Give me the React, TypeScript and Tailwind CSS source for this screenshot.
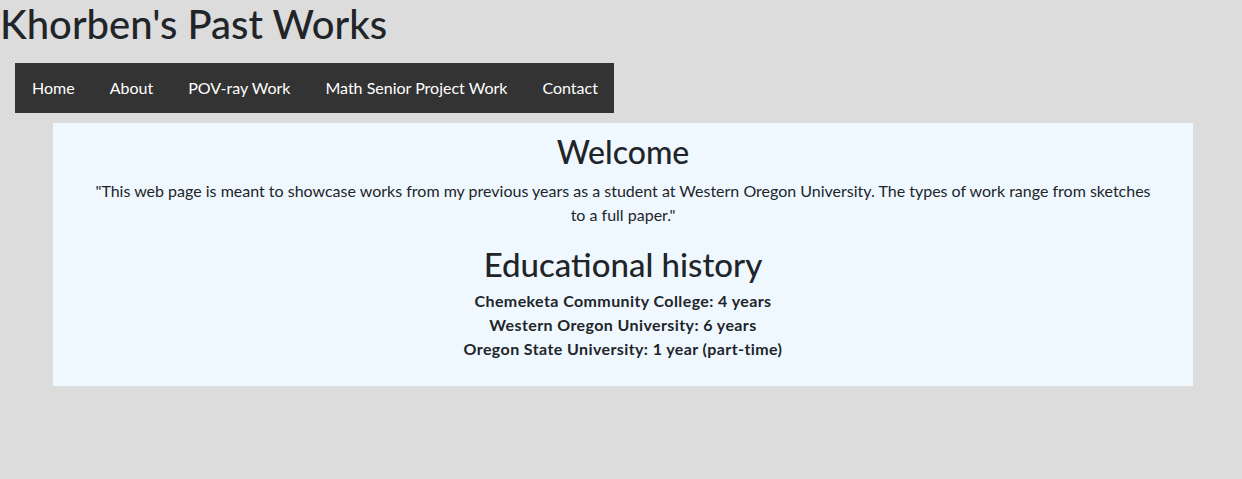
export default function App() {
  const links = ['Home', 'About', 'POV-ray Work', 'Math Senior Project Work', 'Contact'];
  return (
    <div className="bg-[#dcdcdc] min-h-screen text-[#212529]" style={{ fontFamily: 'Lato, "Noto Sans", sans-serif' }}>
      <h1 className="text-[40px] leading-[48px] font-medium m-0">Khorben's Past Works</h1>
      <nav className="mt-[15px] ml-[15px] w-fit bg-[#333333] flex gap-[3px] pl-px h-[50px] items-center">
        {links.map((l) => (
          <a key={l} className="text-white text-[16px] px-4 leading-[50px]">{l}</a>
        ))}
      </nav>
      <main className="mt-[10px] ml-[53px] w-[1140px] bg-[#f0f8ff] px-[35px] pt-[10px] pb-[25px] text-center">
        <h2 className="text-[32px] leading-[38px] font-medium mb-2">Welcome</h2>
        <p className="text-[16px] leading-6 mb-[18px]">"This web page is meant to showcase works from my previous years as a student at Western Oregon University. The types of work range from sketches to a full paper."</p>
        <h2 className="text-[33px] leading-[38px] font-medium mb-[6px]">Educational history</h2>
        <p className="text-[16px] leading-6 font-bold tracking-[0.4px]">Chemeketa Community College: 4 years</p>
        <p className="text-[16px] leading-6 font-bold tracking-[0.4px]">Western Oregon University: 6 years</p>
        <p className="text-[16px] leading-6 font-bold tracking-[0.4px]">Oregon State University: 1 year (part-time)</p>
      </main>
    </div>
  );
}
